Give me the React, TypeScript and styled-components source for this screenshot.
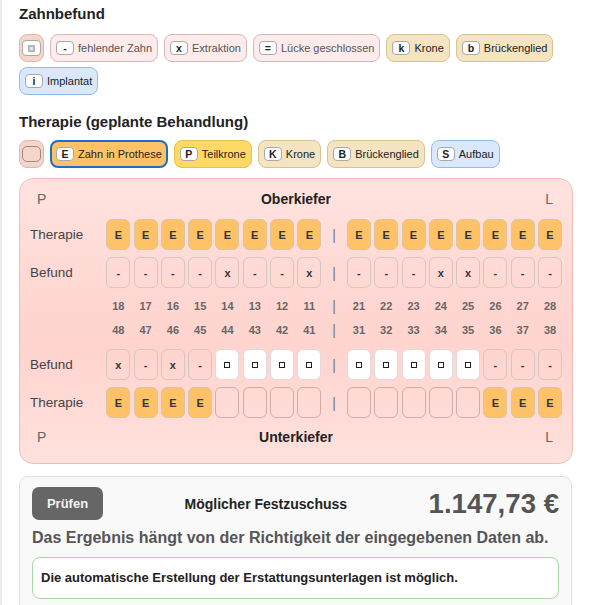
import React from 'react';
import styled, { createGlobalStyle, css } from 'styled-components';

const GlobalStyle = createGlobalStyle`
  html, body { margin: 0; padding: 0; background: #fff; overflow: hidden; }
  body { font-family: "Liberation Sans", Arial, sans-serif; color: #222; }
  * { box-sizing: border-box; }
`;

const Page = styled.div`
  width: 591px;
  height: 605px;
  overflow: hidden;
  border-left: 2px solid #ececec;
  padding: 5px 18px 0 17px;
`;

const Heading = styled.h3<{ $mb: number }>`
  margin: 0 0 ${p => p.$mb}px;
  font-size: 15px;
  line-height: 17px;
  font-weight: bold;
  color: #222;
`;

const ChipRow = styled.div<{ $mb: number }>`
  display: flex;
  flex-wrap: wrap;
  gap: 5px 6px;
  margin-bottom: ${p => p.$mb}px;
`;

type Tone = 'salmon' | 'pink' | 'beige' | 'blue' | 'orange' | 'yellow';

const tones: Record<Tone, { bg: string; bd: string; fg: string }> = {
  salmon: { bg: '#f5d4ca', bd: '#dcb9af', fg: '#333' },
  pink: { bg: '#fdeceb', bd: '#d9b6b6', fg: '#555' },
  beige: { bg: '#f4e4c2', bd: '#d8c28f', fg: '#222' },
  blue: { bg: '#d9e9fb', bd: '#94bbe9', fg: '#222' },
  orange: { bg: '#ffc266', bd: '#e8b05a', fg: '#222' },
  yellow: { bg: '#ffd966', bd: '#e6c150', fg: '#222' },
};

const Chip = styled.div<{ $tone: Tone; $selected?: boolean; $iconOnly?: boolean }>`
  display: inline-flex;
  align-items: center;
  gap: 4px;
  height: 28px;
  padding: ${p => (p.$iconOnly ? '0 2px' : '0 5px')};
  border-radius: 8px;
  background: ${p => tones[p.$tone].bg};
  border: 1px solid ${p => tones[p.$tone].bd};
  color: ${p => tones[p.$tone].fg};
  font-size: 11px;
  white-space: nowrap;
  ${p =>
    p.$selected &&
    css`
      border: 2px solid #1d6fc3;
      padding: 0 4px;
    `}
`;

const Key = styled.span<{ $wide?: boolean }>`
  display: inline-flex;
  align-items: center;
  justify-content: center;
  width: ${p => (p.$wide ? 19 : 18)}px;
  height: ${p => (p.$wide ? 16 : 14)}px;
  background: #fff;
  border: 1px solid #a8a8a8;
  border-radius: 4px;
  font-size: 10.5px;
  font-weight: bold;
  color: #222;
`;

const KeyBlank = styled(Key)`
  background: transparent;
  border-color: #9a8a86;
  border-radius: 5px;
`;

const KeySquare = styled.span`
  width: 7px;
  height: 7px;
  border: 2px solid #b8b8b8;
  background: #e8e8e8;
`;

const Panel = styled.div`
  border: 1px solid #f0bdb7;
  border-radius: 14px;
  background: linear-gradient(180deg, #ffe3df 0%, #ffd6d1 45%, #ffd4cf 60%, #ffe1dd 100%);
  padding: 10px 10px 16px;
  margin-bottom: 12px;
`;

const JawHeader = styled.div<{ $mt?: number }>`
  display: grid;
  grid-template-columns: 1fr auto 1fr;
  align-items: center;
  height: 20px;
  margin-top: ${p => p.$mt ?? 0}px;
  font-size: 14px;
`;

const Side = styled.span<{ $end?: boolean }>`
  color: #666;
  justify-self: ${p => (p.$end ? 'end' : 'start')};
  padding: ${p => (p.$end ? '0 9px 0 0' : '0 0 0 7px')};
`;

const JawTitle = styled.span`
  font-weight: bold;
  color: #222;
`;

const Row = styled.div<{ $mt: number; $h: number }>`
  display: grid;
  grid-template-columns: 73px repeat(8, 24px) 1fr repeat(8, 24px);
  column-gap: 3.3px;
  align-items: center;
  height: ${p => p.$h}px;
  margin-top: ${p => p.$mt}px;
`;

const RowLabel = styled.span`
  font-size: 13.5px;
  color: #444;
`;

const Divider = styled.span`
  text-align: center;
  color: #777;
  font-size: 14px;
`;

type CellKind = 'plan' | 'open' | 'finding' | 'white';

const Cell = styled.div<{ $kind: CellKind }>`
  height: 31px;
  border-radius: 6px;
  display: flex;
  align-items: center;
  justify-content: center;
  font-size: 11px;
  font-weight: bold;
  color: #333;
  border: 1px solid #d6c5c1;
  background: transparent;
  ${p =>
    p.$kind === 'plan' &&
    css`
      background: #ffc266;
      border-color: #dcc4a6;
    `}
  ${p =>
    p.$kind === 'open' &&
    css`
      border-color: #d2aca8;
    `}
  ${p =>
    p.$kind === 'white' &&
    css`
      background: #fff;
      border-color: #e2dada;
    `}
`;

const Square = styled.span`
  width: 6px;
  height: 6px;
  border: 1px solid #222;
`;

const ToothNo = styled.span`
  text-align: center;
  font-size: 11px;
  font-weight: bold;
  color: #666;
`;

const Card = styled.section`
  width: 553px;
  height: 160px;
  border: 1px solid #e0e0e0;
  border-radius: 9px;
  background: #f9f9f9;
  padding: 10px 12px 20px;
`;

const ResultRow = styled.div`
  display: flex;
  align-items: center;
`;

const CheckButton = styled.button`
  width: 71px;
  height: 33px;
  border: none;
  border-radius: 7px;
  background: #666;
  color: #f2f2f2;
  font-family: inherit;
  font-size: 13px;
  font-weight: bold;
`;

const ResultTitle = styled.span`
  flex: 1;
  text-align: center;
  font-size: 14px;
  font-weight: bold;
  color: #222;
`;

const Amount = styled.span`
  font-size: 27.6px;
  line-height: 1;
  font-weight: bold;
  color: #555;
`;

const Notice = styled.p`
  margin: 8px 0 0;
  font-size: 16px;
  line-height: 19px;
  font-weight: bold;
  color: #555;
`;

const SuccessBox = styled.div`
  margin-top: 10px;
  border: 1px solid #a9d9a3;
  border-radius: 8px;
  background: #fff;
  padding: 12px 8px;
  font-size: 13px;
  line-height: 16px;
  font-weight: bold;
  color: #222;
`;

type Entry = string;

const upperLeft = ['18', '17', '16', '15', '14', '13', '12', '11'];
const upperRight = ['21', '22', '23', '24', '25', '26', '27', '28'];
const lowerLeft = ['48', '47', '46', '45', '44', '43', '42', '41'];
const lowerRight = ['31', '32', '33', '34', '35', '36', '37', '38'];

const upperPlan: Entry[] = Array(16).fill('E');
const upperFinding: Entry[] = ['-', '-', '-', '-', 'x', '-', '-', 'x', '-', '-', '-', 'x', 'x', '-', '-', '-'];
const lowerFinding: Entry[] = ['x', '-', 'x', '-', 'o', 'o', 'o', 'o', 'o', 'o', 'o', 'o', 'o', '-', '-', '-'];
const lowerPlan: Entry[] = ['E', 'E', 'E', 'E', '', '', '', '', '', '', '', '', '', 'E', 'E', 'E'];

function renderCell(v: Entry, row: 'plan' | 'finding', i: number) {
  if (row === 'plan') {
    return (
      <Cell key={i} $kind={v ? 'plan' : 'open'}>
        {v}
      </Cell>
    );
  }
  if (v === 'o') {
    return (
      <Cell key={i} $kind="white">
        <Square />
      </Cell>
    );
  }
  return (
    <Cell key={i} $kind="finding">
      {v}
    </Cell>
  );
}

function CellRow({ label, values, row, mt }: { label: string; values: Entry[]; row: 'plan' | 'finding'; mt: number }) {
  return (
    <Row $mt={mt} $h={31}>
      <RowLabel>{label}</RowLabel>
      {values.slice(0, 8).map((v, i) => renderCell(v, row, i))}
      <Divider>|</Divider>
      {values.slice(8).map((v, i) => renderCell(v, row, i + 8))}
    </Row>
  );
}

function NumberRow({ left, right, mt }: { left: string[]; right: string[]; mt: number }) {
  return (
    <Row $mt={mt} $h={24}>
      <span />
      {left.map(n => (
        <ToothNo key={n}>{n}</ToothNo>
      ))}
      <Divider>|</Divider>
      {right.map(n => (
        <ToothNo key={n}>{n}</ToothNo>
      ))}
    </Row>
  );
}

export default function App() {
  return (
    <>
      <GlobalStyle />
      <Page>
        <Heading $mb={12}>Zahnbefund</Heading>
        <ChipRow $mb={18}>
          <Chip $tone="salmon" $iconOnly>
            <Key $wide>
              <KeySquare />
            </Key>
          </Chip>
          <Chip $tone="pink">
            <Key>-</Key>fehlender Zahn
          </Chip>
          <Chip $tone="pink">
            <Key>x</Key>Extraktion
          </Chip>
          <Chip $tone="pink">
            <Key>=</Key>Lücke geschlossen
          </Chip>
          <Chip $tone="beige">
            <Key>k</Key>Krone
          </Chip>
          <Chip $tone="beige">
            <Key>b</Key>Brückenglied
          </Chip>
          <Chip $tone="blue">
            <Key>i</Key>Implantat
          </Chip>
        </ChipRow>

        <Heading $mb={10}>Therapie (geplante Behandlung)</Heading>
        <ChipRow $mb={10}>
          <Chip $tone="salmon" $iconOnly>
            <KeyBlank $wide />
          </Chip>
          <Chip $tone="orange" $selected>
            <Key>E</Key>Zahn in Prothese
          </Chip>
          <Chip $tone="yellow">
            <Key>P</Key>Teilkrone
          </Chip>
          <Chip $tone="beige">
            <Key>K</Key>Krone
          </Chip>
          <Chip $tone="beige">
            <Key>B</Key>Brückenglied
          </Chip>
          <Chip $tone="blue">
            <Key>S</Key>Aufbau
          </Chip>
        </ChipRow>

        <Panel>
          <JawHeader>
            <Side>P</Side>
            <JawTitle>Oberkiefer</JawTitle>
            <Side $end>L</Side>
          </JawHeader>
          <CellRow label="Therapie" values={upperPlan} row="plan" mt={10} />
          <CellRow label="Befund" values={upperFinding} row="finding" mt={7} />
          <NumberRow left={upperLeft} right={upperRight} mt={6} />
          <NumberRow left={lowerLeft} right={lowerRight} mt={0} />
          <CellRow label="Befund" values={lowerFinding} row="finding" mt={7} />
          <CellRow label="Therapie" values={lowerPlan} row="plan" mt={7} />
          <JawHeader $mt={9}>
            <Side>P</Side>
            <JawTitle>Unterkiefer</JawTitle>
            <Side $end>L</Side>
          </JawHeader>
        </Panel>

        <Card>
          <ResultRow>
            <CheckButton>Prüfen</CheckButton>
            <ResultTitle>Möglicher Festzuschuss</ResultTitle>
            <Amount>1.147,73 €</Amount>
          </ResultRow>
          <Notice>Das Ergebnis hängt von der Richtigkeit der eingegebenen Daten ab.</Notice>
          <SuccessBox>Die automatische Erstellung der Erstattungsunterlagen ist möglich.</SuccessBox>
        </Card>
      </Page>
    </>
  );
}
